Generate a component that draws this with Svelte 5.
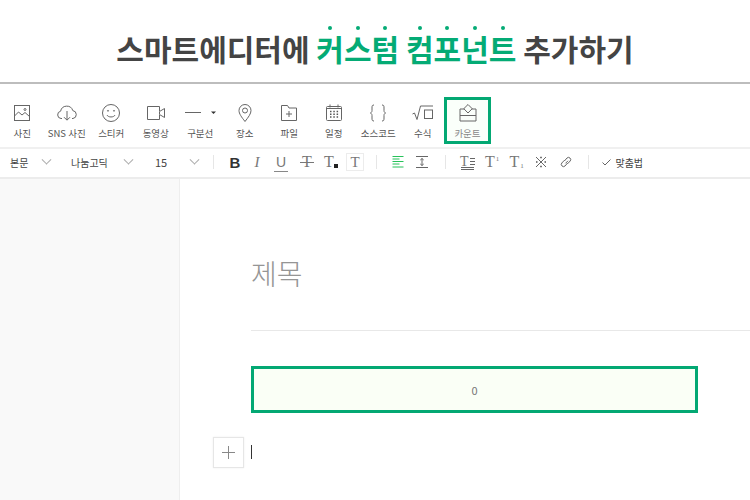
<script>
	const tools = ['사진', 'SNS 사진', '스티커', '동영상', '구분선', '장소', '파일', '일정', '소스코드', '수식'];
</script>

<div class="page">
	<header class="banner">
		<h1>
			스마트에디터에
			<em><span>커</span><span>스</span><span>텀</span></em>
			<em><span>컴</span><span>포</span><span>넌</span><span>트</span></em>
			추가하기
		</h1>
	</header>

	<div class="toolbar">
		{#each tools as label, i}
			<div class="tool">
				{#if i === 0}
					<svg viewBox="0 0 20 20"><rect x="2.5" y="2.5" width="15" height="15" /><path d="M2.5 13l4-4 3.500 3 3-2.500 4.500 4" /><circle cx="13" cy="6.500" r="1" /></svg>
				{:else if i === 1}
					<svg viewBox="0 0 22 20" class="wide"><path d="M6 15.500H5a3.700 3.700 0 0 1-.4-7.300A6.300 6.300 0 0 1 16.800 7.600 4 4 0 0 1 17 15.500h-1" /><path d="M11 8v9M8 14.200l3 3 3-3" /></svg>
				{:else if i === 2}
					<svg viewBox="0 0 20 20"><circle cx="10" cy="10" r="8.500" /><path d="M6 12c1 2.600 7 2.600 8 0" /><circle cx="7" cy="7.800" r=".5" /><circle cx="13" cy="7.800" r=".5" /></svg>
				{:else if i === 3}
					<svg viewBox="0 0 20 20"><path d="M13.500 8V3.500h-12v13h12V12" /><path d="M13.500 8.500l5-3v9l-5-3z" /></svg>
				{:else if i === 4}
					<svg viewBox="0 0 32 20" class="line"><path d="M1 9.500h16" /><path class="solid" d="M27 8.500h5l-2.500 2.500z" /></svg>
				{:else if i === 5}
					<svg viewBox="0 0 20 20"><path d="M10 18.500C6.500 14 4 10.800 4 7.500a6 6 0 0 1 12 0c0 3.300-2.500 6.500-6 11z" /><circle cx="10" cy="7.500" r="2.500" /></svg>
				{:else if i === 6}
					<svg viewBox="0 0 20 20"><path d="M2.500 2.500h6l1.500 2.500h7.500v12.500h-15z" /><path d="M10 8v6M7 11h6" /></svg>
				{:else if i === 7}
					<svg viewBox="0 0 20 20"><rect x="2.500" y="3.500" width="15" height="14" rx="1" /><path d="M6 1.500v3M14 1.500v3M2.500 5.500h15" /><path class="dots" d="M6 8.500h1.500M9.300 8.500h1.500M12.600 8.500h1.500M6 11.300h1.500M9.300 11.300h1.500M12.600 11.300h1.500M6 14.100h1.500M9.300 14.100h1.500M12.600 14.100h1.500" /></svg>
				{:else if i === 8}
					<svg viewBox="0 0 20 20"><path d="M6 2c-2 0-2 1-2 3v2.500c0 1.500-.6 2-1.500 2.500.9.500 1.500 1 1.500 2.500V15c0 2 0 3 2 3M14 2c2 0 2 1 2 3v2.500c0 1.500.6 2 1.500 2.500-.9.500-1.500 1-1.500 2.500V15c0 2 0 3-2 3" /></svg>
				{:else}
					<svg viewBox="0 0 22 20" class="wide"><path d="M.5 11l2-1 2.500 6.500L8.500 3H21" /><rect x="12.500" y="7" width="8" height="8.500" /></svg>
				{/if}
				<span>{label}</span>
			</div>
		{/each}
		<div class="tool active">
			<svg viewBox="0 0 20 20"><path d="M6.500 6H2v12h16V6h-4.500M2 12.500h16" /><path d="M10 1.500l4.200 4.200L10 10 5.800 5.700z" /></svg>
			<span>카운트</span>
		</div>
	</div>

	<div class="formatbar">
		<div class="select s1"><span>본문</span><i class="chev"></i></div>
		<div class="select s2"><span>나눔고딕</span><i class="chev"></i></div>
		<div class="select s3"><span>15</span><i class="chev"></i></div>
		<b class="sep"></b>
		<div class="btns">
			<span class="btn bold">B</span>
			<span class="btn ital">I</span>
			<span class="btn under">U</span>
			<span class="btn strike">T</span>
			<span class="btn tdot">T<i></i></span>
			<span class="btn"><span class="boxed">T</span></span>
		</div>
		<b class="sep sep2"></b>
		<div class="btns">
			<span class="btn">
				<svg viewBox="0 0 12 12" class="green"><path d="M.5 .5h11M.5 3h7M.5 5.500h11M.5 8h7M.5 11h11" /></svg>
			</span>
			<span class="btn">
				<svg viewBox="0 0 12 12"><path d="M0 .5h12M0 11.500h12M6 2.500v7M4.300 4L6 2.500 7.700 4M4.300 8L6 9.500 7.700 8" /></svg>
			</span>
		</div>
		<b class="sep sep3"></b>
		<div class="btns wide">
			<span class="btn lineh">
				T<svg viewBox="0 0 5 7"><path d="M0 .5h5M0 3.500h5M0 6.500h5" /></svg>
			</span>
			<span class="btn sup">T<small>1</small></span>
			<span class="btn sup sub">T<small>1</small></span>
			<span class="btn">
				<svg viewBox="0 0 12 12"><path d="M1 1l10 10M11 1L1 11" /><path class="dots" d="M5.200 1.500h1.600M5.200 10.500h1.600M1 6h1.500M9.500 6h1.500" /></svg>
			</span>
			<span class="btn">
				<svg viewBox="0 0 12 12"><path d="M5.500 7.300L8 4.800M4.400 5L7 2a2.200 2.200 0 0 1 3.200 3L7.500 7.800M7.600 7L5 10a2.200 2.200 0 0 1-3.200-3L4.500 4.200" /></svg>
			</span>
		</div>
		<b class="sep sep4"></b>
		<div class="spell">
			<svg viewBox="0 0 9 7"><path d="M.5 3.500L3 6 8.500.5" /></svg>
			<span>맞춤법</span>
		</div>
	</div>

	<main class="body">
		<aside class="side"></aside>
		<section class="editor">
			<div class="title">제목</div>
			<div class="counter">0</div>
			<div class="para">
				<div class="plus"><svg viewBox="0 0 13 13"><path d="M6.500 0v13M0 6.500h13" /></svg></div>
				<i class="caret"></i>
			</div>
		</section>
	</main>
</div>

<style>
	:global(body) {
		margin: 0;
		background: #fff;
	}

	.page {
		width: 750px;
		height: 500px;
		overflow: hidden;
		font-family: "Noto Sans CJK KR", "Liberation Sans", sans-serif;
		color: #555;
	}

	.banner {
		box-sizing: border-box;
		border-bottom: 2px solid #bdbdbd;
		height: 84px;
		display: flex;
		justify-content: center;
	}

	h1 {
		margin: 26px 0 0;
		font-size: 30px;
		line-height: 44px;
		font-weight: 700;
		color: #444;
		white-space: nowrap;
	}

	em {
		font-style: normal;
		color: #04ab75;
	}

	em span {
		position: relative;
	}

	em span::before {
		content: "";
		position: absolute;
		left: 50%;
		top: 0;
		width: 4px;
		height: 4px;
		margin-left: -2px;
		border-radius: 50%;
		background: #04ab75;
	}

	.toolbar {
		height: 65px;
		box-sizing: border-box;
		padding: 13px 0 0;
		display: flex;
		border-bottom: 2px solid #f0f0f0;
	}

	.tool {
		width: 44.500px;
		height: 47px;
		box-sizing: border-box;
		display: flex;
		flex-direction: column;
		align-items: center;
		font-size: 10px;
		color: #555;
		white-space: nowrap;
	}

	.tool svg {
		width: 20px;
		height: 20px;
		margin-top: 6px;
		flex: none;
	}

	.tool svg.wide {
		width: 22px;
	}

	.tool svg.line {
		width: 32px;
	}

	.tool span {
		font-size: 9.500px;
		line-height: 14px;
		margin-top: 3px;
	}

	svg {
		fill: none;
		stroke: #666;
		stroke-width: 1;
	}

	svg .solid {
		fill: #333;
		stroke: none;
	}

	svg .dots {
		stroke: #555;
		stroke-width: 1.500;
	}

	.tool.active {
		width: 47px;
		margin-left: -1px;
		border: 3px solid #03a873;
		background: #fafffa;
		color: #888;
	}

	.tool.active svg {
		margin-top: 3px;
	}

	.tool.active span {
		margin-top: 3px;
	}

	.formatbar {
		height: 30px;
		box-sizing: border-box;
		padding-bottom: 2px;
		border-bottom: 2px solid #ececec;
		display: flex;
		align-items: center;
		font-size: 10px;
		color: #444;
	}

	.select {
		display: flex;
		align-items: center;
		white-space: nowrap;
	}

	.s1 {
		width: 71px;
		padding-left: 10px;
		box-sizing: border-box;
	}

	.s2 {
		width: 84px;
	}

	.s3 {
		width: 58px;
		font-size: 11px;
	}

	.s1 .chev {
		margin-left: 15px;
	}

	.s2 .chev {
		margin-left: 17px;
	}

	.s3 .chev {
		margin-left: 24px;
	}

	.chev {
		width: 6px;
		height: 6px;
		border-right: 1px solid #aaa;
		border-bottom: 1px solid #aaa;
		transform: rotate(45deg) translate(-2px, -2px);
	}

	.sep {
		width: 1px;
		height: 14px;
		background: #e6e6e6;
		margin-right: 9px;
	}

	.sep2 {
		margin-left: 9px;
	}

	.sep3 {
		margin-left: 11px;
		margin-right: 9px;
	}

	.sep4 {
		margin-left: 10px;
		margin-right: 13px;
	}

	.btns {
		display: flex;
	}

	.btn {
		width: 24px;
		height: 24px;
		display: flex;
		align-items: center;
		justify-content: center;
		font-family: "Liberation Serif", serif;
		font-size: 16px;
		color: #777;
		position: relative;
	}

	.btns.wide .btn {
		width: 24.700px;
	}

	.btn svg {
		width: 12px;
		height: 12px;
	}

	svg.green {
		stroke: #27c25a;
	}

	.bold {
		font-family: "Liberation Sans", sans-serif;
		font-weight: 700;
		font-size: 15px;
		color: #333;
	}

	.ital {
		font-style: italic;
		font-size: 15px;
		left: -2px;
	}

	.under {
		font-family: "Liberation Sans", sans-serif;
		font-size: 14px;
		left: -2px;
	}

	.under::after {
		content: "";
		position: absolute;
		left: 5px;
		right: 5px;
		bottom: 2px;
		height: 1px;
		background: #888;
	}

	.strike::after {
		content: "";
		position: absolute;
		left: 5px;
		right: 5px;
		top: 12px;
		height: 1px;
		background: #777;
	}

	.tdot i {
		width: 4px;
		height: 4px;
		background: #222;
		margin-top: 8px;
	}

	.boxed {
		width: 16px;
		height: 16px;
		line-height: 16px;
		text-align: center;
		font-size: 15px;
		border: 1px solid #ececec;
	}

	.btn.lineh {
		font-size: 14px;
	}

	.lineh svg {
		width: 5px;
		height: 7px;
		margin-left: 1px;
		margin-top: -2px;
	}

	.lineh::after {
		content: "";
		position: absolute;
		left: 6px;
		right: 6px;
		bottom: 4px;
		height: 3px;
		border-top: 1px solid #666;
		border-bottom: 1px solid #666;
		box-sizing: border-box;
	}

	.sup small {
		font-size: 7px;
		margin-bottom: 7px;
		margin-left: 1px;
	}

	.sub small {
		margin-bottom: -7px;
	}

	.spell {
		display: flex;
		align-items: center;
		gap: 4px;
		font-size: 10px;
		color: #444;
	}

	.spell svg {
		width: 9px;
		height: 7px;
	}

	.body {
		height: 321px;
		display: flex;
	}

	.side {
		width: 179px;
		flex: none;
		background: #f9f9f9;
		border-right: 1px solid #eee;
	}

	.editor {
		flex: 1;
		padding-left: 71px;
	}

	.title {
		margin-top: 76px;
		height: 76px;
		box-sizing: border-box;
		border-bottom: 1px solid #e8e8e8;
		font-size: 28px;
		line-height: 36px;
		font-weight: 300;
		color: #959595;
	}

	.counter {
		margin-top: 35px;
		width: 447px;
		height: 47px;
		box-sizing: border-box;
		border: 3px solid #03a873;
		background: #fafff6;
		display: flex;
		align-items: center;
		justify-content: center;
		font-size: 11px;
		color: #777;
	}

	.para {
		position: relative;
		height: 29px;
		margin-top: 24px;
		display: flex;
		align-items: center;
	}

	.plus {
		position: absolute;
		left: -38px;
		top: 0;
		width: 31px;
		height: 31px;
		box-sizing: border-box;
		border: 1px solid #e6e6e6;
		box-shadow: 0 0 2px #eee;
		display: flex;
		align-items: center;
		justify-content: center;
		background: #fff;
	}

	.plus svg {
		width: 13px;
		height: 13px;
		stroke: #888;
	}

	.caret {
		width: 1px;
		height: 14px;
		background: #333;
	}
</style>
